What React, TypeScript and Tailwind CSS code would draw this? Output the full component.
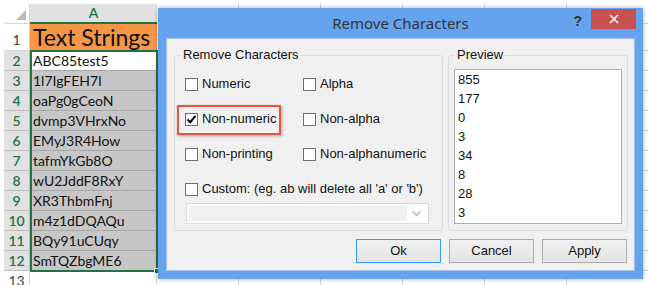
const cells = [
  "ABC85test5",
  "1l7IgFEH7l",
  "oaPg0gCeoN",
  "dvmp3VHrxNo",
  "EMyJ3R4How",
  "tafmYkGb8O",
  "wU2JddF8RxY",
  "XR3ThbmFnj",
  "m4z1dDQAQu",
  "BQy91uCUqy",
  "SmTQZbgME6",
];

const preview = ["855", "177", "0", "3", "34", "8", "28", "3"];

const otherCols = [0, 1, 2, 3, 4, 5];

function EmptyCells() {
  return (
    <>
      {otherCols.map((c) => (
        <div
          key={c}
          className="w-[82px] shrink-0 border-r border-b border-[#d4d4d4] bg-white"
        />
      ))}
    </>
  );
}

function Sheet() {
  return (
    <div className="pt-[4px] pl-[4px] font-['Lato',sans-serif]">
      {/* column headers */}
      <div className="flex h-[20px]">
        <div className="w-[26px] shrink-0 flex items-end justify-end pr-[3px] pb-[3px] border-r border-b border-[#d4d4d4] bg-white">
          <svg width="10" height="10" viewBox="0 0 10 10">
            <polygon points="10,0 10,10 0,10" fill="#b9b9b9" />
          </svg>
        </div>
        <div className="w-[127px] shrink-0 bg-[#e1e1e1] border-b-2 border-[#217346] text-[#217346] text-center text-[14px] font-semibold leading-[18px]">
          A
        </div>
        <EmptyCells />
      </div>

      {/* row 1 */}
      <div className="flex h-[27px]">
        <div className="w-[26px] shrink-0 flex items-end justify-center pb-[1px] border-r border-b border-[#d4d4d4] bg-white text-[14px] text-[#444] leading-[18px]">
          1
        </div>
        <div className="w-[127px] shrink-0 flex items-end pl-[3px] pb-[1px] bg-[#f79646] text-[23px] text-[#111] leading-[25px]">
          Text Strings
        </div>
        <EmptyCells />
      </div>

      {/* rows 2 - 12 */}
      {cells.map((text, i) => (
        <div key={i} className="flex h-[20px]">
          <div className="w-[26px] shrink-0 flex items-end justify-center border-r border-b border-[#bdbdbd] bg-[#e1e1e1] text-[14px] font-semibold text-[#217346] leading-[18px]">
            {i + 2}
          </div>
          <div
            className={
              "w-[127px] shrink-0 flex items-end pl-[3px] border-b border-[#a8a8a8] text-[14px] text-[#111] leading-[18px] " +
              (i === 0 ? "bg-white" : "bg-[#c6c6c6]")
            }
          >
            {text}
          </div>
          <EmptyCells />
        </div>
      ))}

      {/* row 13 */}
      <div className="flex h-[20px]">
        <div className="w-[26px] shrink-0 flex items-end justify-center border-r border-b border-[#d4d4d4] bg-white text-[14px] text-[#444] leading-[18px]">
          13
        </div>
        <div className="w-[127px] shrink-0 border-r border-b border-[#d4d4d4] bg-white" />
        <EmptyCells />
      </div>

      {/* selection outline with fill handle */}
      <div className="absolute left-[30px] top-[50px] w-[128px] h-[222px] border-2 border-[#217346]">
        <div className="absolute -right-[4px] -bottom-[4px] w-[6px] h-[6px] bg-[#217346] border border-white" />
      </div>
    </div>
  );
}

function Checkbox({ checked }: { checked?: boolean }) {
  return (
    <span className="w-[13px] h-[13px] shrink-0 border border-[#707070] bg-white flex items-center justify-center">
      {checked && (
        <svg width="11" height="11" viewBox="0 0 11 11">
          <path d="M1.5 5.5 L4.2 8.2 L9.5 1.8" fill="none" stroke="#000" strokeWidth="2" />
        </svg>
      )}
    </span>
  );
}

function Option({
  label,
  checked,
  highlight,
  wide,
}: {
  label: string;
  checked?: boolean;
  highlight?: boolean;
  wide?: boolean;
}) {
  return (
    <div className={"relative flex items-center gap-[4px] h-[18px]" + (wide ? " col-span-2" : "")}>
      <Checkbox checked={checked} />
      <span className="whitespace-nowrap">{label}</span>
      {highlight && (
        <div className="absolute -left-[8px] -top-[5px] w-[104px] h-[30px] border-2 border-[#e8553a] shadow-[1px_1px_3px_rgba(0,0,0,0.3)]" />
      )}
    </div>
  );
}

function Button({ label, primary }: { label: string; primary?: boolean }) {
  return (
    <button
      className={
        "w-[85px] h-[24px] border bg-gradient-to-b from-[#f0f0f0] to-[#e5e5e5] text-[13px] text-[#111] " +
        (primary ? "border-[#3399ff]" : "border-[#acacac]")
      }
    >
      {label}
    </button>
  );
}

function Dialog() {
  return (
    <div className="absolute left-[158px] top-[8px] w-[485px] h-[271px] bg-[#66a3ee] flex flex-col shadow-[0_0_5px_rgba(0,0,0,0.3)] font-['Liberation_Sans',Arial,sans-serif] text-[13px] text-[#111]">
      {/* title bar */}
      <div className="grid grid-cols-[1fr_auto_1fr] h-[30px] shrink-0">
        <div />
        <div className="font-['Noto_Sans',sans-serif] text-[15px] text-[#333] leading-[30px]">
          Remove Characters
        </div>
        <div className="flex justify-end items-start">
          <span className="mt-[5px] mr-[9px] text-[14px] font-bold text-[#333] leading-[16px]">?</span>
          <button className="mt-[1px] mr-[7px] w-[45px] h-[20px] bg-[#c75050] flex items-center justify-center">
            <svg width="10" height="10" viewBox="0 0 10 10">
              <path d="M1 1 L9 9 M9 1 L1 9" stroke="#fff" strokeWidth="1.6" />
            </svg>
          </button>
        </div>
      </div>

      {/* body */}
      <div className="flex-1 mx-[8px] mb-[8px] bg-[#f0f0f0] border border-[#a6c4ea] pt-[16px] pl-[7px] pr-[6px] flex flex-col">
        <div className="flex gap-[5px]">
          {/* options group */}
          <div className="relative w-[269px] h-[176px] border border-[#dcdcdc] rounded-[3px]">
            <span className="absolute -top-[9px] left-[6px] px-[2px] bg-[#f0f0f0] leading-[15px]">
              Remove Characters
            </span>
            <div className="flex flex-col pl-[10px] pt-[19px]">
              <div className="grid grid-cols-[118px_1fr] gap-y-[17px]">
                <Option label="Numeric" />
                <Option label="Alpha" />
                <Option label="Non-numeric" checked highlight />
                <Option label="Non-alpha" />
                <Option label="Non-printing" />
                <Option label="Non-alphanumeric" />
                <Option label="Custom:  (eg. ab will delete all 'a' or 'b')" wide />
              </div>
              <div className="mt-[5px] ml-[1px] w-[243px] h-[21px] border border-[#d9d9d9] bg-white p-[2px] flex">
                <div className="flex-1 bg-[#f0f0f0]" />
                <div className="w-[19px] flex items-center justify-center">
                  <svg width="9" height="6" viewBox="0 0 9 6">
                    <path d="M0.5 0.5 L4.5 4.5 L8.5 0.5" fill="none" stroke="#b5b5b5" strokeWidth="1.5" />
                  </svg>
                </div>
              </div>
            </div>
          </div>

          {/* preview group */}
          <div className="relative w-[180px] h-[176px] border border-[#dcdcdc] rounded-[3px]">
            <span className="absolute -top-[9px] left-[6px] px-[2px] bg-[#f0f0f0] leading-[15px]">
              Preview
            </span>
            <div className="mt-[13px] ml-[5px] w-[168px] h-[155px] border border-[#abadb3] bg-white pl-[3px]">
              {preview.map((p, i) => (
                <div key={i} className="leading-[19px]">
                  {p}
                </div>
              ))}
            </div>
          </div>
        </div>

        {/* buttons */}
        <div className="mt-[8px] mr-[1px] flex justify-end gap-[8px]">
          <Button label="Ok" primary />
          <Button label="Cancel" />
          <Button label="Apply" />
        </div>
      </div>
    </div>
  );
}

export default function App() {
  return (
    <div className="relative w-[648px] h-[285px] overflow-hidden bg-white">
      <Sheet />
      <Dialog />
    </div>
  );
}
